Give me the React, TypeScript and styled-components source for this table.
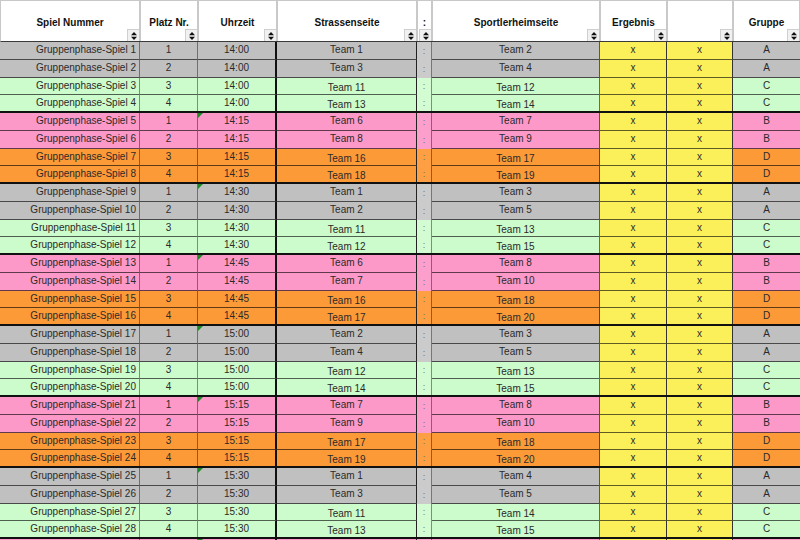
import React from 'react';
import styled, { createGlobalStyle, css } from 'styled-components';

const GlobalStyle = createGlobalStyle`
  html, body {
    margin: 0;
    padding: 0;
    background: #ffffff;
    overflow: hidden;
  }
  body {
    font-family: 'Liberation Sans', Arial, sans-serif;
  }
`;

type Tone = 'gray' | 'green' | 'pink' | 'orange';

const toneColors: Record<Tone, string> = {
  gray: '#c0c0c0',
  green: '#ccfccc',
  pink: '#fd99c9',
  orange: '#fd9a38',
};

const colonColors: Record<Tone, string> = {
  gray: '#cbcbcb',
  green: '#d3fcd3',
  pink: '#fd9fcc',
  orange: '#fd9f42',
};

const COLUMNS = '140px 58px 79px 140px 15px 168px 67px 66px 67px';
const ROW_HEIGHT = 17.75;

const Sheet = styled.div`
  width: 800px;
  height: 540px;
  overflow: hidden;
  font-size: 10px;
  color: #2a2a2a;
`;

const HeaderRow = styled.div`
  display: grid;
  grid-template-columns: ${COLUMNS};
  height: 42px;
  box-sizing: border-box;
  border-top: 1px solid #c8c8c8;
  border-left: 1px solid #c8c8c8;
  border-bottom: 1px solid #3a3a3a;
  background: #ffffff;
`;

const HeaderCell = styled.div`
  position: relative;
  box-sizing: border-box;
  border-right: 2px solid #c9c9c9;
  padding-top: 16px;
  text-align: center;
  font-weight: bold;
  color: #111;
  white-space: nowrap;
`;

const SortButton = styled.div`
  position: absolute;
  right: 0;
  bottom: 0;
  width: 12px;
  height: 12px;
  box-sizing: border-box;
  background: #f1f1f1;
  border-top: 1px solid #cfcfcf;
  border-left: 1px solid #cfcfcf;
  display: flex;
  align-items: center;
  justify-content: center;
`;

const Row = styled.div<{ $tone: Tone; $groupEnd: boolean }>`
  display: grid;
  grid-template-columns: ${COLUMNS};
  height: ${ROW_HEIGHT}px;
  box-sizing: border-box;
  background: ${(p) => toneColors[p.$tone]};
  border-bottom: ${(p) => (p.$groupEnd ? '2px solid #111' : 'none')};
`;

const Cell = styled.div<{
  $align?: 'left' | 'center' | 'right';
  $low?: boolean;
  $line?: boolean;
  $edge?: string;
  $fill?: string;
}>`
  position: relative;
  box-sizing: border-box;
  display: flex;
  align-items: ${(p) => (p.$low ? 'flex-end' : 'center')};
  justify-content: ${(p) =>
    p.$align === 'right' ? 'flex-end' : p.$align === 'left' ? 'flex-start' : 'center'};
  padding: 0 3px;
  line-height: 12px;
  white-space: nowrap;
  border-right: ${(p) => p.$edge || '1px solid rgba(0, 0, 0, 0.42)'};
  border-bottom: ${(p) => (p.$line ? '1px solid rgba(0, 0, 0, 0.62)' : 'none')};
  background: ${(p) => p.$fill || 'transparent'};
`;

const TimeCell = styled(Cell)<{ $flag: boolean }>`
  ${(p) =>
    p.$flag &&
    css`
      &::before {
        content: '';
        position: absolute;
        top: 0;
        left: 0;
        border-top: 5px solid #1f8a2a;
        border-right: 5px solid transparent;
      }
    `}
`;

const Colon = styled.span`
  color: #6f6f6f;
  font-size: 9px;
`;

const SortIcon = () => (
  <svg width="6" height="8" viewBox="0 0 6 8">
    <path d="M3 0 L6 3.2 H0 Z" fill="#111" />
    <path d="M3 8 L6 4.8 H0 Z" fill="#111" />
  </svg>
);

type Match = {
  nr: number;
  platz: number;
  zeit: string;
  home: number;
  away: number;
  gruppe: string;
};

const toneOf: Record<string, Tone> = { A: 'gray', C: 'green', B: 'pink', D: 'orange' };

const slots: [string, number[]][] = [
  ['14:00', [1, 2, 3, 4, 11, 12, 13, 14]],
  ['14:15', [6, 7, 8, 9, 16, 17, 18, 19]],
  ['14:30', [1, 3, 2, 5, 11, 13, 12, 15]],
  ['14:45', [6, 8, 7, 10, 16, 18, 17, 20]],
  ['15:00', [2, 3, 4, 5, 12, 13, 14, 15]],
  ['15:15', [7, 8, 9, 10, 17, 18, 19, 20]],
  ['15:30', [1, 4, 3, 5, 11, 14, 13, 15]],
];

const matches: Match[] = slots.flatMap(([zeit, t], slot) => {
  const early = slot % 2 === 0;
  const groups = early ? ['A', 'A', 'C', 'C'] : ['B', 'B', 'D', 'D'];
  return [0, 1, 2, 3].map((i) => ({
    nr: slot * 4 + i + 1,
    platz: i + 1,
    zeit,
    home: t[i * 2],
    away: t[i * 2 + 1],
    gruppe: groups[i],
  }));
});

const headers = [
  'Spiel Nummer',
  'Platz Nr.',
  'Uhrzeit',
  'Strassenseite',
  ':',
  'Sportlerheimseite',
  'Ergebnis',
  '',
  'Gruppe',
];

export default function App() {
  return (
    <Sheet>
      <GlobalStyle />
      <HeaderRow>
        {headers.map((h, i) => (
          <HeaderCell key={i}>
            {h}
            <SortButton>
              <SortIcon />
            </SortButton>
          </HeaderCell>
        ))}
      </HeaderRow>
      {matches.map((m, idx) => {
        const tone = toneOf[m.gruppe];
        const groupEnd = idx % 4 === 3;
        const line = !groupEnd;
        const low = tone === 'green' || tone === 'orange';
        return (
          <Row key={m.nr} $tone={tone} $groupEnd={groupEnd}>
            <Cell $align="right" $line={line}>{`Gruppenphase-Spiel ${m.nr}`}</Cell>
            <Cell $line={line}>{m.platz}</Cell>
            <TimeCell $line={line} $flag={idx % 4 === 0 && idx > 0} $edge="2px solid #111">
              {m.zeit}
            </TimeCell>
            <Cell $line={line} $low={low} $edge="1px solid #222">{`Team ${m.home}`}</Cell>
            <Cell $fill={colonColors[tone]}>
              <Colon>:</Colon>
            </Cell>
            <Cell $line={line} $low={low} $edge="1px solid rgba(0, 0, 0, 0.55)">{`Team ${m.away}`}</Cell>
            <Cell $line={line} $fill="#fcf05a" $edge="1px solid #333">x</Cell>
            <Cell $line={line} $fill="#fcf05a" $edge="1px solid #333">x</Cell>
            <Cell $line={line} $edge="none">{m.gruppe}</Cell>
          </Row>
        );
      })}
      <Row $tone="pink" $groupEnd={false}>
        <Cell />
        <Cell />
        <TimeCell $flag $edge="2px solid #111" />
        <Cell $edge="1px solid #222" />
        <Cell $fill={colonColors.pink} />
        <Cell />
        <Cell $fill="#fcf05a" $edge="1px solid #333" />
        <Cell $fill="#fcf05a" $edge="1px solid #333" />
        <Cell $edge="none" />
      </Row>
    </Sheet>
  );
}
